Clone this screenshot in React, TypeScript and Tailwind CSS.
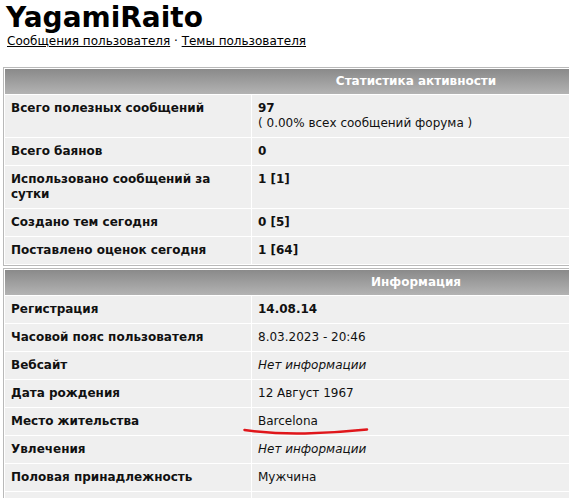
const FONT = "font-['Tahoma','DejaVu_Sans','Verdana',sans-serif]";

type Row = {label: string; value: React.ReactNode};

const STATS: Row[] = [
  {
    label: 'Всего полезных сообщений',
    value: (
      <>
        <div className="font-bold">97</div>
        <div>( 0.00% всех сообщений форума )</div>
      </>
    ),
  },
  {label: 'Всего баянов', value: <span className="font-bold">0</span>},
  {label: 'Использовано сообщений за сутки', value: <span className="font-bold">1 [1]</span>},
  {label: 'Создано тем сегодня', value: <span className="font-bold">0 [5]</span>},
  {label: 'Поставлено оценок сегодня', value: <span className="font-bold">1 [64]</span>},
];

const INFO: Row[] = [
  {label: 'Регистрация', value: <span className="font-bold">14.08.14</span>},
  {label: 'Часовой пояс пользователя', value: '8.03.2023 - 20:46'},
  {label: 'Вебсайт', value: <i>Нет информации</i>},
  {label: 'Дата рождения', value: '12 Август 1967'},
  {
    label: 'Место жительства',
    value: (
      <span className="relative">
        Barcelona
        <svg className="absolute left-[-15px] top-[13px]" width="126" height="10" viewBox="0 0 126 10" fill="none">
          <path d="M1.5 3 C 20 5.5, 40 7, 62 6.5 S 105 4.5, 124 2.5" stroke="#e0161b" strokeWidth="2.5" strokeLinecap="round" />
        </svg>
      </span>
    ),
  },
  {label: 'Увлечения', value: <i>Нет информации</i>},
  {label: 'Половая принадлежность', value: 'Мужчина'},
  {label: '\u00a0', value: ''},
];

const Section = ({title, rows}: {title: string; rows: Row[]}) => (
  <div className="w-[826px] border border-[#b9b9b9] bg-white p-px flex flex-col gap-px">
    <div className="h-[25px] bg-gradient-to-b from-[#8a8a8a] to-[#b3b3b3] flex items-center justify-center text-white font-bold">
      {title}
    </div>
    {rows.map((r, i) => (
      <div key={i} className="flex gap-px">
        <div className="w-[246px] shrink-0 bg-[#efefef] px-[6px] py-[6px] font-bold text-[#111]">{r.label}</div>
        <div className="flex-1 bg-[#efefef] px-[6px] py-[6px] text-[#111]">{r.value}</div>
      </div>
    ))}
  </div>
);

export default function App() {
  return (
    <div className={`${FONT} w-full h-[498px] overflow-hidden bg-white text-[12px] leading-[15px] text-black`}>
      <div className="pl-[6px] pt-[2px]">
        <h1 className="text-[28px] leading-[32px] font-bold">YagamiRaito</h1>
        <div className="pl-px leading-[14px]">
          <a href="#" className="underline">Сообщения пользователя</a>
          {' · '}
          <a href="#" className="underline">Темы пользователя</a>
        </div>
      </div>
      <div className="ml-[3px] mt-[19px] flex flex-col gap-[2px]">
        <Section title="Статистика активности" rows={STATS} />
        <Section title="Информация" rows={INFO} />
      </div>
    </div>
  );
}
